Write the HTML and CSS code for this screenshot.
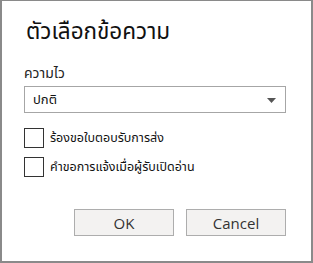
FILE: index.html
```html
<!DOCTYPE html>
<html lang="th">
<head>
<meta charset="utf-8">
<link rel="stylesheet" href="styles.css">
</head>
<body>
<div class="dialog">
  <h1 class="title">ตัวเลือกข้อความ</h1>
  <div class="label">ความไว</div>
  <div class="select">
    <span class="select-value">ปกติ</span>
    <svg class="arrow" width="9" height="5" viewBox="0 0 9 5"><polygon points="0,0 9,0 4.5,5" fill="#555"/></svg>
  </div>
  <div class="checks">
    <label class="check"><span class="box"></span><span class="check-text">ร้องขอใบตอบรับการส่ง</span></label>
    <label class="check"><span class="box"></span><span class="check-text">คำขอการแจ้งเมื่อผู้รับเปิดอ่าน</span></label>
  </div>
  <div class="buttons">
    <button class="btn">OK</button>
    <button class="btn">Cancel</button>
  </div>
</div>
</body>
</html>
```
FILE: styles.css
```css
html, body {
  margin: 0;
  padding: 0;
  background: #fff;
}
.dialog {
  width: 313px;
  height: 263px;
  box-sizing: border-box;
  border: 2px solid #8a8a8a;
  border-top-width: 1px;
  padding: 0 25px 0 22px;
  font-family: "Noto Sans Thai", "Leelawadee UI", Tahoma, "Noto Sans", sans-serif;
  color: #1a1a1a;
}
.title {
  margin: 0;
  padding-top: 16px;
  height: 31px;
  line-height: 31px;
  font-size: 22.5px;
  font-weight: normal;
  padding-left: 2px;
  color: #111;
}
.label {
  margin-top: 16px;
  height: 20px;
  line-height: 20px;
  font-size: 14px;
  color: #222;
}
.select {
  margin-top: 2px;
  height: 27px;
  box-sizing: border-box;
  border: 1px solid #a6a6a6;
  display: flex;
  align-items: center;
  justify-content: space-between;
  padding: 0 9px 0 8px;
}
.select-value {
  font-size: 13px;
  color: #111;
}
.arrow {
  display: block;
  margin-top: 2px;
}
.checks {
  margin-top: 15px;
  display: flex;
  flex-direction: column;
  gap: 9px;
}
.check {
  display: flex;
  align-items: center;
  height: 20px;
}
.box {
  width: 20px;
  height: 20px;
  box-sizing: border-box;
  border: 1px solid #333;
  flex: none;
}
.check-text {
  margin-left: 6px;
  font-size: 12.5px;
  color: #111;
}
.buttons {
  margin-top: 32px;
  display: flex;
  justify-content: flex-end;
  gap: 12px;
}
.btn {
  width: 100px;
  height: 27px;
  box-sizing: border-box;
  border: 1px solid #adadad;
  background: #f3f2f1;
  font-family: "Open Sans", "Noto Sans", sans-serif;
  font-size: 15px;
  color: #333;
  padding: 0;
  margin: 0;
}
```
